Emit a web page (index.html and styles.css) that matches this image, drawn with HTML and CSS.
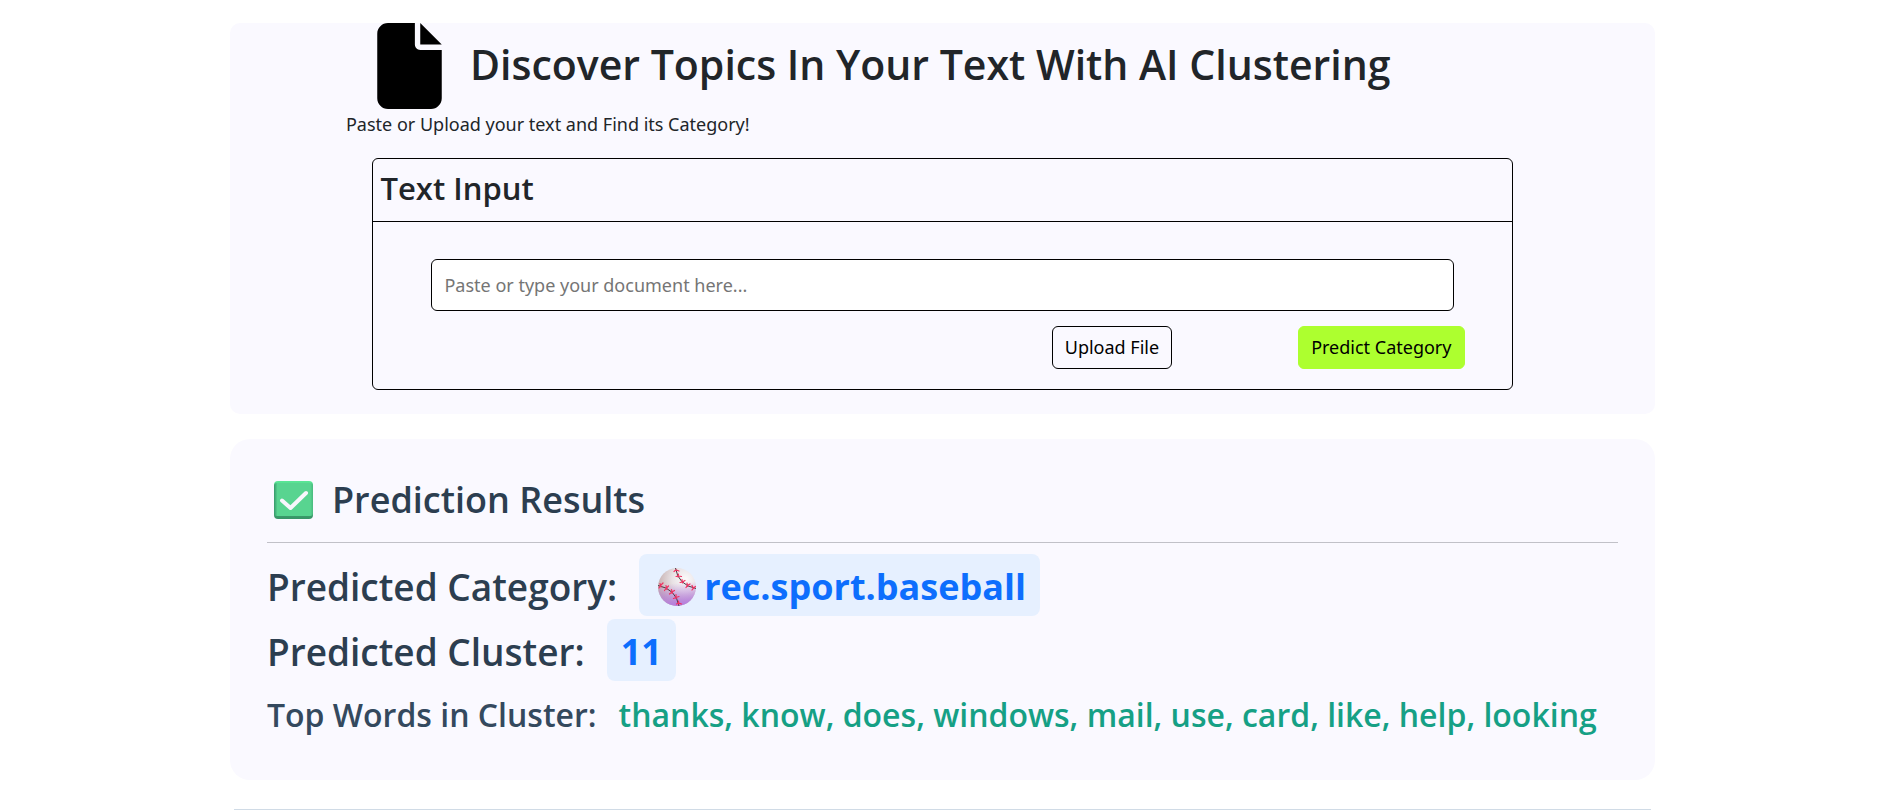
FILE: index.html
```
<!DOCTYPE html>
<html lang="en">
<head>
<meta charset="utf-8">
<title>Topic Clustering</title>
<link rel="stylesheet" href="styles.css">
</head>
<body>
<main class="page">
  <section class="hero">
    <header class="hero-head">
      <svg class="file-icon" viewBox="0 0 384 512" aria-hidden="true"><path d="M0 64C0 28.700 28.700 0 64 0H224V128c0 17.700 14.300 32 32 32H384V448c0 35.300-28.700 64-64 64H64c-35.300 0-64-28.700-64-64V64zm384 64H256V0L384 128z"/></svg>
      <h1 class="hero-title">Discover Topics In Your Text With AI Clustering</h1>
    </header>
    <p class="hero-sub">Paste or Upload your text and Find its Category!</p>
    <form class="panel">
      <h2 class="panel-title"><label for="doc">Text Input</label></h2>
      <div class="panel-body">
        <input class="doc-input" id="doc" type="text" placeholder="Paste or type your document here...">
        <div class="actions">
          <button class="btn btn-outline" type="button">Upload File</button>
          <button class="btn btn-predict" type="button">Predict Category</button>
        </div>
      </div>
    </form>
  </section>

  <section class="results">
    <h2 class="results-title">
      <svg class="check-icon" viewBox="0 0 39 38" aria-hidden="true">
        <defs>
          <linearGradient id="edge" x1="0" y1="0" x2="0" y2="1"><stop offset="0" stop-color="#5be796"/><stop offset=".2" stop-color="#50cf8a"/><stop offset="1" stop-color="#379466"/></linearGradient>
          <linearGradient id="side" x1="0" y1="0" x2="1" y2="0"><stop offset="0" stop-color="#36996a"/><stop offset=".09" stop-color="#58d490"/><stop offset=".93" stop-color="#58d490"/><stop offset="1" stop-color="#49b97e"/></linearGradient>
        </defs>
        <rect width="39" height="38" rx="4" fill="url(#edge)"/>
        <rect y="2" width="39" height="33" rx="3" fill="url(#side)"/>
        <path d="M8 19.500l8.500 7.500L32 12" fill="none" stroke="#f8f6fc" stroke-width="4" stroke-linecap="round" stroke-linejoin="round"/>
      </svg>
      Prediction Results
    </h2>
    <hr class="rule">
    <p class="result-line"><span class="result-label">Predicted Category:</span>
      <strong class="badge">
        <svg class="ball-icon" viewBox="0 0 38 38" aria-hidden="true">
          <defs>
            <radialGradient id="ball" cx=".72" cy=".3" r=".75"><stop offset="0" stop-color="#fbfafa"/><stop offset=".45" stop-color="#e9e3e6"/><stop offset="1" stop-color="#c5aeae"/></radialGradient>
            <linearGradient id="shade" x1=".45" y1=".4" x2=".5" y2="1"><stop offset="0" stop-color="#b57be0" stop-opacity="0"/><stop offset="1" stop-color="#b57be0"/></linearGradient>
          </defs>
          <circle cx="19" cy="19" r="19" fill="url(#ball)"/>
          <circle cx="19" cy="19" r="19" fill="url(#shade)"/>
          <path d="M17.500 0Q20 17 38 20.500M0 17.500Q18 21 21 38" fill="none" stroke="#4a3b40" stroke-width="1"/>
          <g fill="none" stroke="#f03060" stroke-width="1.200" stroke-linecap="round">
            <path d="M16 3.500l2-1.500 3 1M18 8.500l2.500-.5 3 .5M20.500 6l-.5 3M22 14.500l2.500-.5 2.500-1.500M24 11.500l.5 3.500M28 19.500l1.500-2 2.500-1.500M29 15l.5 3.500M34 22l1.500-2 2-1.500M34 17.500l1.500 3"/>
            <path d="M1 20l1.500-2.500L5 15M2 15.500l1 3.500M6.500 22.500l2-2.500 2-2M8 17.500l.8 4M11.500 26l2.500-2 2.500-1.500M13.500 21.500l.8 4M15.500 30.500l2.500-1 3-1M18 26.500v4M18.500 36l2-1 3 1M20.500 33v3"/>
          </g>
        </svg>
        rec.sport.baseball</strong>
    </p>
    <p class="result-line"><span class="result-label">Predicted Cluster:</span> <strong class="badge">11</strong></p>
    <p class="words-line">Top Words in Cluster: <span class="words">thanks, know, does, windows, mail, use, card, like, help, looking</span></p>
  </section>

  <hr class="page-rule">
</main>
</body>
</html>
```
FILE: styles.css
```
* {
  box-sizing: border-box;
}

body {
  margin: 0;
  padding-right: 3px;
  background: #fff;
  color: #212529;
  font-family: "Segoe UI", "Noto Sans", sans-serif;
  font-size: 18px;
  line-height: 30px;
}

h1, h2, p {
  margin: 0;
}

h1, h2, .result-line, .words-line {
  font-family: "Segoe UI", "Open Sans", "Noto Sans", sans-serif;
  font-weight: 600;
}

.page {
  width: 75.6%;
  margin: 0 auto;
  padding-top: 23px;
}

.hero {
  padding-bottom: 24px;
  border-radius: 10px;
  background: #faf9ff;
}

.hero-head {
  display: flex;
  align-items: center;
  gap: 28px;
  padding-left: 147px;
}

.file-icon {
  width: 65px;
  height: 86px;
}

.hero-title {
  padding-bottom: 5px;
  font-size: 41px;
  line-height: 54px;
}

.hero-sub {
  padding-left: 116px;
}

.panel {
  width: 80%;
  margin: 19px auto 0;
  border: 1px solid #000;
  border-radius: 6px;
}

.panel-title {
  padding: 9px 7px 13px;
  border-bottom: 1px solid #000;
  font-size: 31px;
  line-height: 40px;
}

.panel-body {
  padding: 37px 58px 20px;
}

.doc-input {
  display: block;
  width: 100%;
  height: 52px;
  padding: 0 12px;
  border: 1px solid #000;
  border-radius: 6px;
  background: #fff;
  color: #212529;
  font: inherit;
}

.doc-input::placeholder {
  color: #757575;
  opacity: 1;
}

.actions {
  display: flex;
  justify-content: flex-end;
  align-items: center;
  gap: 126px;
  margin: 15px -11px 0 0;
}

.btn {
  padding: 5px 12px;
  border: 1px solid #000;
  border-radius: 6px;
  background: transparent;
  color: #000;
  font: inherit;
  line-height: 31px;
}

.btn-predict {
  border-color: #adff2f;
  background: #adff2f;
}

.results {
  margin-top: 25px;
  padding: 38px 37px 43px;
  border-radius: 20px;
  background: #faf9ff;
  color: #2c3e50;
}

.results-title {
  display: flex;
  align-items: center;
  gap: 19px;
  padding-left: 7px;
  font-size: 36px;
  line-height: 46px;
}

.check-icon {
  width: 39px;
  height: 38px;
}

.rule {
  height: 1px;
  margin: 19px 0 11px;
  border: 0;
  background: #c1c1c8;
}

.result-line {
  display: flex;
  align-items: center;
  gap: 22px;
  margin-bottom: 3px;
  font-size: 37px;
  line-height: 46px;
}

.result-label {
  padding-top: 4px;
}

.badge {
  display: flex;
  align-items: center;
  gap: 8px;
  padding: 10px 14px 6px;
  border-radius: 8px;
  background: #e6f0ff;
  color: #0d6efd;
  font-size: 36px;
  font-weight: 700;
}

.ball-icon {
  width: 38px;
  height: 38px;
  margin-left: 5px;
}

.words-line {
  display: flex;
  gap: 22px;
  padding-top: 9px;
  color: #34495e;
  font-size: 32px;
  line-height: 44px;
}

.words {
  color: #16a085;
}

.page-rule {
  height: 1px;
  margin: 29px 4px 0;
  border: 0;
  background: #d0dbe6;
}
```
